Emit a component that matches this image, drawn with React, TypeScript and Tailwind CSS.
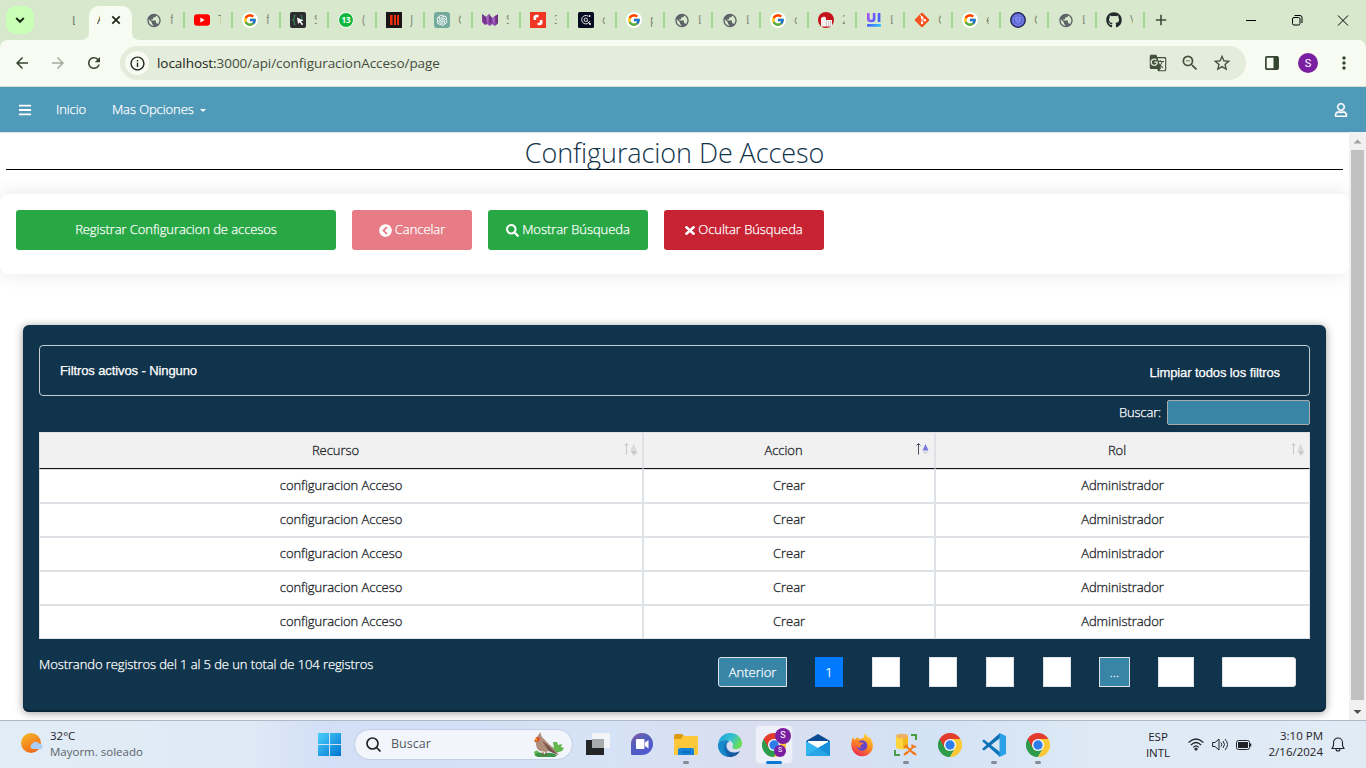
import React from "react";
import { FcGoogle } from "react-icons/fc";
import { FaBars, FaRegUser, FaChevronCircleLeft, FaSearch, FaTimes, FaGithub } from "react-icons/fa";
import { MdPublic, MdGTranslate, MdZoomOut, MdStarBorder, MdMoreVert, MdArrowBack, MdArrowForward, MdRefresh, MdInfoOutline } from "react-icons/md";
import { AiOutlineOpenAI } from "react-icons/ai";

const Globe = () => <MdPublic className="size-[17px] text-[#5f6368]" />;

const Google = () => (
  <span className="flex size-4 items-center justify-center rounded-full bg-white">
    <FcGoogle className="size-[14px]" />
  </span>
);

const Youtube = () => (
  <svg className="size-4" viewBox="0 0 16 16">
    <rect y="2.3" width="16" height="11.4" rx="3" fill="#f00" />
    <path d="M6.4 5.6v4.8L10.6 8z" fill="#fff" />
  </svg>
);

const Braces = () => (
  <svg className="size-4" viewBox="0 0 16 16">
    <rect width="16" height="16" rx="2" fill="#2d2d30" />
    <path d="M5.500 3C4 3 4.300 5 4.200 6.500Q4 7.500 2.800 8Q4 8.500 4.200 9.500C4.300 11 4 13 5.500 13M10.500 3C12 3 11.700 5 11.800 6.500Q12 7.500 13.200 8" fill="none" stroke="#35865a" strokeWidth="1.2" />
    <path d="M7 5.500l6.500 3-2.600.8 2.300 3-1.300 1-2.200-3L8 12z" fill="#fff" />
  </svg>
);

const Whatsapp = () => (
  <span className="flex size-4 items-center justify-center rounded-full border border-white bg-[#12b83e] text-[8px] leading-none font-bold text-white">
    13
  </span>
);

const RedBars = () => (
  <svg className="size-4" viewBox="0 0 16 16">
    <rect width="16" height="16" fill="#1c1517" />
    <path d="M4 3h2.600v10H4zM8 3h2v10H8zM11 3h2v10h-2z" fill="#e8300c" />
  </svg>
);

const OpenAI = () => (
  <span className="flex size-4 items-center justify-center rounded-[3px] bg-[#74aa9c]">
    <AiOutlineOpenAI className="size-[14px] text-white" />
  </span>
);

const PurpleW = () => (
  <svg className="size-4" viewBox="0 0 16 16">
    <path d="M0 2l4 3 3-3 3 4 3-2 3-2v9l-3 3-3-2-2 2-3-2-2 1-3-3z" fill="#8e44ad" />
    <path d="M0 2l4 3v8l-2-2zM7 2l3 4-1 6-2-3zM13 4l3-1v8l-2 2z" fill="#6c3483" />
    <path d="M4 5l3-3-1 11zM10 6l3-2-1 9z" fill="#a569bd" />
  </svg>
);

const RedS = () => (
  <svg className="size-4" viewBox="0 0 16 16">
    <rect width="16" height="16" fill="#f03522" />
    <path d="M8.500 2.800H6.200Q3.500 2.800 3.500 5.500V8h2.700V6q0-.7.700-.7h1.600zM7.500 13.200h2.300q2.700 0 2.700-2.700V8H9.800v2q0 .7-.7.700H7.500z" fill="#fff" />
  </svg>
);

const Orbit = () => (
  <svg className="size-4" viewBox="0 0 16 16">
    <rect width="16" height="16" rx="1.500" fill="#050a20" />
    <path d="M10.200 4.200A4.200 4.200 0 1 0 11.800 9.200M9.500 9.500l2.300 2.200" fill="none" stroke="#fff" strokeWidth=".9" />
    <circle cx="7.800" cy="7.800" r="1.700" fill="none" stroke="#fff" strokeWidth=".9" />
    <circle cx="11.600" cy="4" r=".9" fill="#fff" />
    <circle cx="12" cy="12" r=".9" fill="#fff" />
  </svg>
);

const RedBuilding = () => (
  <svg className="size-4" viewBox="0 0 16 16">
    <circle cx="8" cy="8" r="8" fill="#c3151b" />
    <path d="M3 6l3-1.500 2 1.300V8h6v6.500H3z" fill="#f4f1f1" />
    <path d="M8.500 9v5M10.500 9v5M12.500 9v5" stroke="#c9bdbd" strokeWidth=".8" />
  </svg>
);

const UiMark = () => (
  <svg className="size-4" viewBox="0 0 16 16">
    <defs>
      <linearGradient id="ui" x2="1" y2=".4">
        <stop stopColor="#b455f5" />
        <stop offset="1" stopColor="#4263ff" />
      </linearGradient>
      <linearGradient id="ub" x2="1">
        <stop stopColor="#4a5cff" />
        <stop offset="1" stopColor="#31c4ff" />
      </linearGradient>
    </defs>
    <path d="M1 1h2.600v5.500q0 1.300 1.600 1.300t1.600-1.300V1h2.600v6q0 3.200-4.200 3.200T1 7zM11.700 1h2.700v9h-2.700z" fill="url(#ui)" />
    <rect x="1" y="12" width="14" height="2.700" rx=".8" fill="url(#ub)" />
  </svg>
);

const GitMark = () => (
  <svg className="size-4" viewBox="0 0 16 16">
    <rect x="2.600" y="2.600" width="10.800" height="10.800" rx="1" transform="rotate(45 8 8)" fill="#f4511e" />
    <path d="M6 3l2 2.200v6M8 5.300l2.800 2.800" stroke="#fff" strokeWidth="1" fill="none" />
    <circle cx="8" cy="5.500" r="1.200" fill="#fff" />
    <circle cx="8" cy="11" r="1.200" fill="#fff" />
    <circle cx="10.800" cy="8.200" r="1.200" fill="#fff" />
  </svg>
);

const BlueBall = () => (
  <svg className="size-4" viewBox="0 0 16 16">
    <circle cx="8" cy="8" r="7.300" fill="#5b66d2" stroke="#1d2250" strokeWidth="1.300" />
    <circle cx="8" cy="8" r="5.200" fill="none" stroke="#8791e6" strokeWidth=".7" />
    <path d="M5.500 5.500Q8 4.500 10.500 5.500Q11 9.500 8 11.500Q5 9.500 5.500 5.500z" fill="#6f7bea" stroke="#98a2f0" strokeWidth=".7" />
  </svg>
);

const Github = () => <FaGithub className="size-4 text-[#24292e]" />;

const tabs: [React.FC, string][] = [
  [Globe, "f"], [Youtube, "T"], [Google, "f"], [Braces, "S"], [Whatsapp, "("], [RedBars, "J"], [OpenAI, "C"],
  [PurpleW, "S"], [RedS, "3"], [Orbit, "c"], [Google, "p"], [Globe, "L"], [Globe, "L"], [Google, "c"],
  [RedBuilding, "2"], [UiMark, "L"], [GitMark, "C"], [Google, "e"], [BlueBall, "C"], [Globe, "L"], [Github, "V"],
];

const TabStrip = () => (
  <div className="flex h-10 bg-[#d8e8cd]">
    <button className="mt-1.5 ml-1.5 flex size-7 items-center justify-center rounded-[10px] bg-[#caffb8]">
      <svg className="size-3" viewBox="0 0 12 12" fill="none" stroke="#1b2a16" strokeWidth="2">
        <path d="M2.200 4l3.800 3.800L9.800 4" />
      </svg>
    </button>
    <span className="ml-[38px] w-[3px] overflow-hidden text-[12px] leading-[41px] text-[#6a7565]">L</span>
    <div className="mt-1.5 ml-[6px] flex h-[34px]">
      <svg className="size-2 self-end" viewBox="0 0 8 8"><path d="M8 0v8H0Q8 8 8 0z" fill="#f8fbf1" /></svg>
      <div className="flex w-[43px] items-center rounded-t-[10px] bg-[#f8fbf1] pb-1.5">
        <span className="ml-2 w-[3px] overflow-hidden text-[12px] text-[#3a4535]">A</span>
        <svg className="ml-[11px] size-[10px]" viewBox="0 0 10 10" stroke="#1c2118" strokeWidth="1.700"><path d="M1.300 1.300l7.400 7.400M8.700 1.300L1.300 8.700" /></svg>
      </div>
      <svg className="size-2 self-end" viewBox="0 0 8 8"><path d="M0 0v8h8Q0 8 0 0z" fill="#f8fbf1" /></svg>
    </div>
    <div className="-ml-[3px] flex">
      {tabs.map(([Icon, letter], i) => (
        <div key={i} className="flex w-12 items-center pl-[9px]">
          <span className="flex w-4 shrink-0 justify-center"><Icon /></span>
          <span className="ml-2 w-[3px] overflow-hidden text-[12px] text-[#7f8a79]">{letter}</span>
          <span className="ml-auto h-4 w-[2px] bg-[#a3d592]" />
        </div>
      ))}
    </div>
    <svg className="mt-[14px] ml-[10px] size-3" viewBox="0 0 12 12" stroke="#3c4b37" strokeWidth="1.600"><path d="M6 .8v10.400M.8 6h10.400" /></svg>
    <div className="mt-[14px] mr-[17px] ml-auto flex gap-[34px]">
      <svg className="size-3" viewBox="0 0 12 12" stroke="#000"><path d="M1 6.500h10" /></svg>
      <svg className="size-3" viewBox="0 0 12 12" stroke="#000" fill="none"><rect x="1.500" y="3.500" width="7.500" height="7.500" rx="1.500" /><path d="M3.500 1.500H9Q11 1.500 11 3.500V9" /></svg>
      <svg className="size-3" viewBox="0 0 12 12" stroke="#000"><path d="M1 1.500l10 10M11 1.500l-10 10" /></svg>
    </div>
  </div>
);

const AddressBar = () => (
  <div className="bg-[#d8e8cd]">
    <div className="flex h-[47px] items-center rounded-t-[8px] border-b border-[#d8ddd0] bg-[#f8fbf1]">
      <MdArrowBack className="ml-[13px] size-[18px] text-[#35452f]" />
      <MdArrowForward className="ml-[18px] size-[18px] text-[#a5aba0]" />
      <MdRefresh className="ml-[18px] size-[18px] text-[#35452f]" />
      <div className="ml-[17px] flex h-[34px] w-[1126px] items-center rounded-full bg-[#e4ecdb]">
        <span className="ml-[5px] flex size-6 items-center justify-center rounded-full bg-[#f8fbf1]">
          <MdInfoOutline className="size-[17px] text-[#1f261c]" />
        </span>
        <span className="ml-2 text-[13.500px] tracking-[-0.050px] text-[#454c41]">
          <span className="text-[#1b1f19]">localhost:</span>3000/api/configuracionAcceso/page
        </span>
        <MdGTranslate className="ml-auto size-[18px] text-[#42503c]" />
        <MdZoomOut className="ml-[13px] size-[20px] text-[#42503c]" />
        <MdStarBorder className="mr-[14px] ml-[12px] size-[20px] text-[#42503c]" />
      </div>
      <svg className="ml-[19px] size-[14px]" viewBox="0 0 14 14"><rect x=".9" y=".9" width="12.200" height="12.200" rx="1" fill="none" stroke="#35452f" strokeWidth="1.700" /><path d="M8.500 1H13v12H8.500z" fill="#35452f" /></svg>
      <span className="ml-[19px] flex size-5 items-center justify-center rounded-full bg-[#7b1fa2] font-[Roboto,sans-serif] text-[11px] leading-none text-white">S</span>
      <MdMoreVert className="ml-[16px] size-5 text-[#35452f]" />
    </div>
  </div>
);

const NavBar = () => (
  <nav className="flex h-[45px] items-center bg-[#4f99b9] text-[13px] font-light tracking-[-0.100px] text-white [-webkit-text-stroke:0.250px_white]">
    <FaBars className="ml-[18px] size-[14px]" />
    <span className="ml-6 w-[30px] whitespace-nowrap">Inicio</span>
    <span className="ml-[26px] w-[82px] whitespace-nowrap">Mas Opciones</span>
    <span className="mt-px ml-1.5 border-x-[3.500px] border-t-[3.500px] border-x-transparent border-t-white" />
    <FaRegUser className="mr-[18px] ml-auto size-[14px]" strokeWidth={14} stroke="white" />
  </nav>
);

const SortIcon = ({ active = false }: { active?: boolean }) => (
  <svg className="mt-[8px] mr-[5px] h-4 w-[14px]" viewBox="0 0 14 16">
    <path d="M3.500 13.500V2.500M1.500 4.500l2-2 2 2" fill="none" stroke={active ? "#4d4d5c" : "#c9c9c9"} />
    {active ? (
      <>
        <path d="M10.500 3l3 6.500h-6z" fill="#7878dc" />
        <path d="M7.500 10.500h6l-3 3z" fill="#d3d3d3" />
      </>
    ) : (
      <>
        <path d="M10 2l4 8v3l-4 2z" fill="#dedede" />
        <path d="M10.500 3l3 6.500h-6z" fill="#d9d9d9" />
        <path d="M7.500 10h6l-3 4z" fill="#c6c6c6" />
      </>
    )}
  </svg>
);

const HeadCell = ({ label, active }: { label: string; active?: boolean }) => (
  <div className="flex border-x border-t border-b border-x-[#dee2e6] border-t-[#dee2e6] border-b-[#111111] bg-[#f1f1f1]">
    <span className="flex-1 pl-2 text-center leading-[34px]">{label}</span>
    <SortIcon active={active} />
  </div>
);

const DataTable = () => (
  <div className="mt-[7px] bg-white text-[13px] font-light tracking-[-0.050px] text-[#212529] [-webkit-text-stroke:0.300px_#212529]">
    <div className="grid h-[37px] grid-cols-[604px_292px_375px]">
      <HeadCell label="Recurso" />
      <HeadCell label="Accion" active />
      <HeadCell label="Rol" />
    </div>
    {[0, 1, 2, 3, 4].map((r) => (
      <div key={r} className="grid h-[34px] grid-cols-[604px_292px_375px] text-center leading-[30px]">
        <div className="border border-[#dee2e6]">configuracion Acceso</div>
        <div className="border border-[#dee2e6]">Crear</div>
        <div className="border border-[#dee2e6]">Administrador</div>
      </div>
    ))}
  </div>
);

const Pagination = () => (
  <div className="mr-[14px] flex h-[30px] text-[13px] leading-[28px] font-light text-white [-webkit-text-stroke:0.250px_white]">
    <span className="w-[69px] rounded-l-[3px] border border-[#dee2e6] bg-[#3885a8] text-center">Anterior</span>
    <span className="ml-7 w-7 border border-[#007bff] bg-[#007bff] text-center">1</span>
    <span className="ml-[29px] w-7 border border-[#dee2e6] bg-white" />
    <span className="ml-[29px] w-7 border border-[#dee2e6] bg-white" />
    <span className="ml-[29px] w-7 border border-[#dee2e6] bg-white" />
    <span className="ml-[29px] w-7 border border-[#dee2e6] bg-white" />
    <span className="ml-7 w-[31px] border border-[#dee2e6] bg-[#3885a8] text-center">…</span>
    <span className="ml-7 w-9 border border-[#dee2e6] bg-white" />
    <span className="ml-7 w-[74px] rounded-r-[3px] border border-[#dee2e6] bg-white" />
  </div>
);

const Page = () => (
  <div className="flex h-[588px] bg-white">
    <main className="w-[1349px] overflow-hidden border-t border-[#dee2e6]">
      <h1 className="mx-1.5 h-[37px] border-b border-black text-center text-[27px] leading-[40px] font-light tracking-[-0.080px] text-[#10344a]">
        Configuracion De Acceso
      </h1>
      <section className="mt-6 flex h-20 gap-4 rounded-[8px] bg-white p-4 text-[13px] font-light tracking-[-0.070px] text-white shadow-[0_0_20px_rgba(0,0,0,0.1)] [-webkit-text-stroke:0.250px_white]">
        <button className="h-10 w-80 rounded-[3px] bg-[#28a745]">Registrar Configuracion de accesos</button>
        <button className="flex h-10 w-[120px] items-center justify-center gap-[3px] rounded-[3px] bg-[#e77c86]"><FaChevronCircleLeft className="size-[13px]" />Cancelar</button>
        <button className="flex h-10 w-40 items-center justify-center gap-[3px] rounded-[3px] bg-[#28a745]"><FaSearch className="size-[13px]" />Mostrar Búsqueda</button>
        <button className="flex h-10 w-40 items-center justify-center gap-[3px] rounded-[3px] bg-[#c82333]"><FaTimes className="h-[13px] w-[10px]" viewBox="0 0 352 512" preserveAspectRatio="none" />Ocultar Búsqueda</button>
      </section>
      <section className="mt-[51px] ml-[23px] h-[387px] w-[1303px] rounded-[6px] bg-[#10344b] px-4 pt-5 shadow-[0_1px_8px_rgba(0,0,0,0.4),inset_0_-2px_1px_#0a2739]">
        <div className="flex h-[51px] justify-between rounded-[4px] border border-[#c5cdd2] pr-[29px] pl-5 font-['Liberation_Sans',sans-serif] text-[13px] tracking-[-0.100px] text-white [-webkit-text-stroke:0.250px_white]">
          <span className="leading-[50px]">Filtros activos - Ninguno</span>
          <span className="leading-[54px]">Limpiar todos los filtros</span>
        </div>
        <div className="mt-1 flex h-[25px] items-center justify-end gap-[6px] text-[13px] font-light tracking-[-0.150px] text-white [-webkit-text-stroke:0.250px_white]">
          <span>Buscar:</span>
          <span className="h-[25px] w-[143px] rounded-[2px] border border-[#aaa] bg-[#3885a8]" />
        </div>
        <DataTable />
        <div className="mt-[18px] flex justify-between">
          <span className="text-[13px] leading-[15px] font-light tracking-[-0.090px] text-white [-webkit-text-stroke:0.250px_white]">Mostrando registros del 1 al 5 de un total de 104 registros</span>
          <Pagination />
        </div>
      </section>
    </main>
    <div className="flex w-[17px] flex-col items-center justify-between bg-[#f1f1f1]">
      <svg className="h-[18px] w-[17px]" viewBox="0 0 17 18"><path d="M8.500 7.500l4 4h-8z" fill="#a0a0a0" /></svg>
      <div className="h-[550px] w-[13px] bg-[#c1c1c1]" />
      <svg className="h-5 w-[17px]" viewBox="0 0 17 20"><path d="M8.500 14l4-4h-8z" fill="#505050" /></svg>
    </div>
  </div>
);

const Chrome = () => (
  <svg className="size-6" viewBox="0 0 24 24">
    <path d="M12 12L1.600 6A12 12 0 0 0 12 24l5.200-9z" fill="#2d9d4b" />
    <path d="M12 6h10.400A12 12 0 0 1 12 24l5.200-9z" fill="#fcc934" />
    <path d="M1.600 6A12 12 0 0 1 22.400 6H12L6.800 15z" fill="#e33b2e" />
    <circle cx="12" cy="12" r="6" fill="#fff" />
    <circle cx="12" cy="12" r="4.700" fill="#2f7de9" />
  </svg>
);

const ChromeProfiles = () => (
  <span className="relative">
    <Chrome />
    <span className="absolute -top-[5px] left-[13px] flex size-4 items-center justify-center rounded-full bg-[#7b1fa2] font-[Roboto,sans-serif] text-[9px] text-white">S</span>
    <span className="absolute top-3 left-3 flex size-3 items-center justify-center rounded-full bg-[#7b1fa2] font-[Roboto,sans-serif] text-[7px] text-white">S</span>
  </span>
);

const Windows = () => (
  <svg className="size-[23px]" viewBox="0 0 23 23">
    <defs><linearGradient id="wn" x2="1" y2="1"><stop stopColor="#49d0fb" /><stop offset="1" stopColor="#0074d1" /></linearGradient></defs>
    <path d="M0 0h11v11H0zM12 0h11v11H12zM0 12h11v11H0zM12 12h11v11H12z" fill="url(#wn)" />
  </svg>
);

const TaskView = () => (
  <svg className="size-6" viewBox="0 0 24 24">
    <path d="M0 7h18v15H0z" fill="#242527" />
    <path d="M6 0h18v15H6z" fill="#f3f4f5" />
    <path d="M6 6h12v9H6z" fill="#a9abac" />
  </svg>
);

const Chat = () => (
  <svg className="size-6" viewBox="0 0 24 24">
    <defs><linearGradient id="ch" x2=".7" y2="1"><stop stopColor="#9155a8" /><stop offset=".4" stopColor="#5560b8" /><stop offset="1" stopColor="#5058d3" /></linearGradient></defs>
    <path d="M12 0a11 11 0 1 1 0 22H2q-1.200 0-1-1.200V11A11 11 0 0 1 12 0z" fill="url(#ch)" />
    <rect x="6" y="6" width="8.500" height="10" rx="1" fill="#fff" />
    <path d="M15 9.500l3.500-2.500v8.500L15 13z" fill="#fff" />
  </svg>
);

const Folder = () => (
  <svg className="size-6" viewBox="0 0 24 24">
    <path d="M0 3q0-2 2-2h6l2 2v4H0z" fill="#dc9a11" />
    <path d="M9 3h14q1 0 1 1v18H0V6h7z" fill="#fdc73c" />
    <path d="M4 22v-5q0-2 2-2h12q2 0 2 2v5z" fill="#1584d8" />
    <path d="M7.500 19h9" stroke="#075da8" strokeWidth="1.200" />
  </svg>
);

const Edge = () => (
  <svg className="size-6" viewBox="0 0 24 24">
    <defs>
      <linearGradient id="eg" x2="1" y2=".4"><stop stopColor="#1b9de2" /><stop offset=".6" stopColor="#35c1d1" /><stop offset="1" stopColor="#67dc57" /></linearGradient>
      <linearGradient id="eb" x2="1" y2="1"><stop stopColor="#1683c9" /><stop offset="1" stopColor="#134c92" /></linearGradient>
    </defs>
    <path d="M0 11.500C1 4 6 0 12 0c7 0 12 5 12 10.500 0 3.500-2.700 5.700-6 5.700-2.700 0-3.800-1-3.500-2.200.5-1.500.7-2.500 0-4C12.500 6 4 5.500 0 11.500z" fill="url(#eg)" />
    <path d="M0 11.500C2 7.500 8 6 11.500 8.500 8 9.500 7.500 14 10 17c2.500 3 7 3.300 12 1-2 3.800-5.500 6-10 6C5 24 0 18.500 0 11.500z" fill="url(#eb)" />
    <path d="M11.500 8.500C3.500 8.500 4.500 20.500 12 24 5 24 0 18.500 0 12c2-4.500 8-6 11.500-3.500z" fill="#188acc" />
  </svg>
);

const Mail = () => (
  <svg className="h-[22px] w-6" viewBox="0 0 24 22">
    <path d="M0 7l12-7 12 7v4H0z" fill="#0d4a94" />
    <path d="M2 7h20v8H2z" fill="#fff" />
    <path d="M0 7l12 7 12-7v15H0z" fill="#35b5ed" />
    <path d="M12 14L24 7v15z" fill="#1990dc" />
    <path d="M0 22l12-8 12 8z" fill="#27a5e7" />
  </svg>
);

const Firefox = () => (
  <svg className="size-6" viewBox="0 0 24 24">
    <defs><linearGradient id="ff" x1=".8" x2=".3" y2="1"><stop stopColor="#ffe13c" /><stop offset=".5" stopColor="#ff8d1e" /><stop offset="1" stopColor="#ef2856" /></linearGradient></defs>
    <path d="M3 4l1.500 3 3-3L9 6l4.500-1L15 0l3 4.500L19.500 4c3.500 4 4.500 10 2 14-4 7-14.500 7-18.500 0-2.500-4-2-9 0-14z" fill="url(#ff)" />
    <circle cx="12" cy="12.500" r="5.300" fill="#6646c7" />
    <path d="M5 9c2-1 4-.5 6 .5l3 .5-3 2c-1 .8-1 2 0 3-3 0-5-2-6-6z" fill="#ff7a26" />
  </svg>
);

const Database = () => (
  <svg className="size-6" viewBox="0 0 24 24">
    <path d="M2 3v11c0 3 12 3 12 0V3z" fill="#fbd53b" />
    <path d="M9 15.800c3 0 5-.7 5-1.800V3L9 5z" fill="#f2b91c" />
    <ellipse cx="8" cy="3" rx="6" ry="2.300" fill="#edb262" />
    <path d="M17 2h5v5M1 17v5h5" fill="none" stroke="#4b9c46" strokeWidth="2" />
    <path d="M12 13l8 8M20 13l-8 8" stroke="#ee7a1c" strokeWidth="1.800" />
    <path d="M10 14.500l3.500-2.500M18 11.500q0 3 4 2M10 22l3-3M19 19l3 3" stroke="#ee7a1c" strokeWidth="2" fill="none" />
  </svg>
);

const VsCode = () => (
  <svg className="size-6" viewBox="0 0 24 24">
    <path d="M0 8l2-1.500L18 19v5L0 8z" fill="#1177bd" />
    <path d="M0 16l2 1.500L18 5V0z" fill="#0d6eb2" />
    <path d="M17.500 0L24 3v18l-6.500 3z" fill="#2ba0e8" />
  </svg>
);

const apps: [React.FC, string][] = [
  [TaskView, ""], [Chat, ""], [Folder, "run"], [Edge, ""], [ChromeProfiles, "active"], [Mail, ""],
  [Firefox, ""], [Database, "run"], [Chrome, ""], [VsCode, "run"], [Chrome, "run"],
];

const Bird = () => (
  <svg className="h-[26px] w-8" viewBox="0 0 32 26">
    <path d="M2 20q3-3 5 0l2 4H3zM19 14l3 2-1-6h4l1 3 4-1-1 3 3 1-2 3-6 2z" fill="#62b84f" />
    <path d="M3 22q5-3 9 0 6-3 13 1l-2 2H5z" fill="#3c9449" />
    <path d="M8.500 0L5 5 2 9l2 2q-.5 5 4 8l6 1 3-1 10 4-9-10-6-6q-3-2-3.500-7z" fill="#b08e7a" />
    <path d="M10 9l7 5 9 9-9-4z" fill="#7a544c" />
    <path d="M4 5l4 1-1 3-4 1z" fill="#e54525" />
    <path d="M2 7l3-1v3z" fill="#f7b51e" />
    <path d="M11 20v4M14 20v4" stroke="#8f4938" />
  </svg>
);

const Taskbar = () => (
  <footer className="flex h-12 items-center border-t border-[#b1b8c6] bg-[linear-gradient(90deg,#e1edf6_0%,#dfe9f6_18%,#d2dff6_24%,#d6e2f5_45%,#d9def0_55%,#d3e2f5_68%,#dde9f5_80%,#e0ebf6_100%)] text-[11.500px] text-[#1f2327]">
    <div className="flex w-[308px] items-center">
      <svg className="-mt-1 ml-5 size-6" viewBox="0 0 24 24">
        <defs><linearGradient id="sn" x2=".5" y2="1"><stop stopColor="#f6bd28" /><stop offset="1" stopColor="#f0691b" /></linearGradient></defs>
        <circle cx="11" cy="12" r="10" fill="url(#sn)" />
        <path d="M12 18a3 3 0 0 1 0-5 4 4 0 0 1 7-.5 3 3 0 0 1 2 5.500z" fill="#a9cdf5" />
      </svg>
      <div className="-mt-0.5 ml-[6px] leading-4">
        <div>32°C</div>
        <div className="text-[#5b6269]">Mayorm. soleado</div>
      </div>
    </div>
    <span className="flex w-[43px] justify-center"><Windows /></span>
    <div className="ml-[3px] flex h-[31px] w-[219px] items-center rounded-full border border-[#c3cee2] bg-[#f2f6fc]">
      <svg className="ml-[11px] size-[15px]" viewBox="0 0 15 15" fill="none" stroke="#222" strokeWidth="1.700"><circle cx="6.500" cy="6.500" r="5.500" /><path d="M10.500 10.500l4 4" /></svg>
      <span className="ml-[10px] text-[12.500px] text-[#555b62]">Buscar</span>
      <span className="mr-[8px] ml-auto"><Bird /></span>
    </div>
    <div className="ml-[3px] flex items-center">
      {apps.map(([Icon, state], i) => (
        <div key={i} className="relative flex h-[46px] w-11 items-center justify-center">
          <span className={state === "active" ? "flex h-[39px] w-[38px] items-center justify-center rounded-[4px] border border-[#dfe3ef] bg-[#edf0f8]" : "flex"}>
            <Icon />
          </span>
          {state !== "" && (
            <span className={state === "active" ? "absolute bottom-[4px] h-[3px] w-4 rounded-full bg-[#0d78d4]" : "absolute bottom-[4px] h-[3px] w-[6px] rounded-full bg-[#868b95]"} />
          )}
        </div>
      ))}
    </div>
    <div className="ml-auto w-7 text-center leading-4">
      <div>ESP</div>
      <div>INTL</div>
    </div>
    <svg className="ml-[16px] h-[13px] w-4" viewBox="0 0 16 13" fill="none" stroke="#1f2327" strokeWidth="1.200">
      <path d="M.6 4.500Q8-2.500 15.400 4.500M2.900 7Q8 2 13.100 7M5.200 9.300Q8 6.500 10.800 9.300" />
      <circle cx="8" cy="11" r="1" fill="#1f2327" />
    </svg>
    <svg className="ml-[8px] h-[13px] w-[17px]" viewBox="0 0 17 13" fill="none" stroke="#1f2327"><path d="M.6 4.500H3L7 1v11L3 8.500H.6zM9 4.500q1.500 2 0 4M11 3q3 3.500 0 7M13 1q5 5.500 0 11" /></svg>
    <svg className="ml-[7px] h-[10px] w-4" viewBox="0 0 16 10"><rect x=".5" y=".5" width="13" height="9" rx="2" fill="none" stroke="#1f2327" /><path d="M2 2h10v6H2z" fill="#1f2327" /><path d="M14.500 3.500v3" stroke="#1f2327" strokeWidth="1.500" /></svg>
    <div className="-mt-0.5 ml-[15px] w-[56px] text-right leading-4 whitespace-nowrap">
      <div>3:10 PM</div>
      <div>2/16/2024</div>
    </div>
    <svg className="mr-[21px] ml-[8px] h-[15px] w-[14px]" viewBox="0 0 14 15" fill="none" stroke="#1f2327" strokeWidth="1.100"><path d="M1 11.500h12l-1.500-3V5.500a4.500 4.500 0 0 0-9 0v3zM5 12q0 2 2 2t2-2" /></svg>
  </footer>
);

export default function App() {
  return (
    <div className="h-[768px] w-[1366px] overflow-hidden font-['Open_Sans','Noto_Sans',sans-serif]">
      <TabStrip />
      <AddressBar />
      <NavBar />
      <Page />
      <Taskbar />
    </div>
  );
}
